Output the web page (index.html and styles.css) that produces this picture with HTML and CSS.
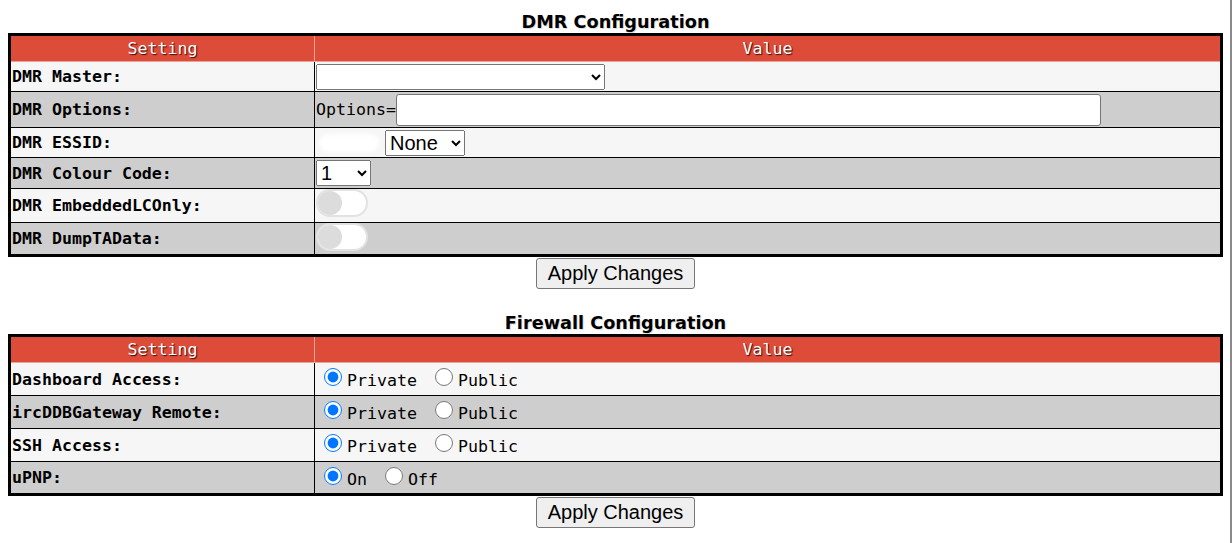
FILE: index.html
```html
<!DOCTYPE html>
<html>
<head>
<meta charset="utf-8">
<title>DMR Configuration</title>
<link rel="stylesheet" href="styles.css">
</head>
<body>
<div class="page">
  <form class="section">
    <table class="cfg">
      <caption>DMR Configuration</caption>
      <colgroup><col class="c-set"><col class="c-val"></colgroup>
      <tr class="head"><th>Setting</th><th>Value</th></tr>
      <tr class="odd h-master"><td class="lbl">DMR Master:</td><td><select class="sel-master"><option></option></select></td></tr>
      <tr class="even h-opts"><td class="lbl">DMR Options:</td><td>Options=<input type="text" class="opts"></td></tr>
      <tr class="odd h-essid"><td class="lbl">DMR ESSID:</td><td><span class="redact"></span><select class="sel-essid"><option>None</option></select></td></tr>
      <tr class="even h-cc"><td class="lbl">DMR Colour Code:</td><td><select class="sel-cc"><option>1</option></select></td></tr>
      <tr class="odd h-emb"><td class="lbl">DMR EmbeddedLCOnly:</td><td class="top"><label class="switch"><input type="checkbox"><span class="knob"></span></label></td></tr>
      <tr class="even h-dump"><td class="lbl">DMR DumpTAData:</td><td class="top"><label class="switch"><input type="checkbox"><span class="knob"></span></label></td></tr>
    </table>
    <div class="actions"><button type="button" class="apply">Apply Changes</button></div>
  </form>

  <form class="section fw">
    <table class="cfg">
      <caption>Firewall Configuration</caption>
      <colgroup><col class="c-set"><col class="c-val"></colgroup>
      <tr class="head"><th>Setting</th><th>Value</th></tr>
      <tr class="odd h-fw"><td class="lbl">Dashboard Access:</td><td><input type="radio" name="dash" checked>Private <input type="radio" name="dash">Public</td></tr>
      <tr class="even h-fw"><td class="lbl">ircDDBGateway Remote:</td><td><input type="radio" name="irc" checked>Private <input type="radio" name="irc">Public</td></tr>
      <tr class="odd h-fw"><td class="lbl">SSH Access:</td><td><input type="radio" name="ssh" checked>Private <input type="radio" name="ssh">Public</td></tr>
      <tr class="even h-fw"><td class="lbl">uPNP:</td><td><input type="radio" name="upnp" checked>On <input type="radio" name="upnp">Off</td></tr>
    </table>
    <div class="actions"><button type="button" class="apply">Apply Changes</button></div>
  </form>
</div>
</body>
</html>
```
FILE: styles.css
```css
html, body {
  margin: 0;
  padding: 0;
  background: #fff;
}

.page {
  box-sizing: border-box;
  width: 1232px;
  min-height: 543px;
  padding: 12px 7px 0 8px;
  border-right: 2px solid #8a8a8a;
}

.section {
  margin: 0;
}

.section.fw {
  margin-top: 24px;
}

.cfg {
  width: 100%;
  table-layout: fixed;
  border-collapse: collapse;
  border: 3px solid #000;
  font-family: "DejaVu Sans Mono", "Liberation Mono", monospace;
  font-size: 16.6px;
  color: #000;
}

.cfg caption {
  font-family: "DejaVu Sans", Verdana, sans-serif;
  font-weight: bold;
  font-size: 17.7px;
  line-height: 21px;
  color: #000;
  text-shadow: 1px 1px 1px rgba(0, 0, 0, 0.15);
}

.c-set {
  width: 305px;
}

.cfg th {
  background: #dd4b39;
  color: #fff;
  font-weight: normal;
  height: 25px;
  padding: 0;
  border: 1px solid #eaa49a;
  text-shadow: 1px 1px 1px #3a0a05;
  line-height: 20px;
}

.cfg td {
  border: 1px solid #000;
  padding: 0 1px;
  vertical-align: middle;
  white-space: nowrap;
}

.cfg td.top {
  vertical-align: top;
}

.cfg .lbl {
  font-weight: bold;
}

.odd td {
  background: #f6f6f6;
}

.even td {
  background: #cecece;
}

.h-master { height: 30px; }
.h-opts { height: 36px; }
.h-essid { height: 30px; }
.h-cc { height: 31px; }
.h-emb { height: 34px; }
.h-dump { height: 33px; }
.h-fw { height: 33px; }

select {
  font-family: "Liberation Sans", Arial, sans-serif;
  font-size: 20px;
  height: 26px;
  margin: 0;
  vertical-align: middle;
  color: #000;
}

.sel-master {
  width: 289px;
}

.sel-cc {
  width: 55px;
}

.sel-essid {
  width: 80px;
}

.opts {
  box-sizing: border-box;
  width: 705px;
  height: 32px;
  margin: 0;
  vertical-align: middle;
  border: 1px solid #767676;
  border-radius: 3px;
  background: #fff;
}

.redact {
  display: inline-block;
  width: 60px;
  height: 18px;
  margin: 0 6px 0 3px;
  vertical-align: middle;
  background: #fff;
  border-radius: 9px;
  filter: blur(2px);
}

.switch {
  position: relative;
  display: inline-block;
  box-sizing: border-box;
  width: 52px;
  height: 28px;
  border: 2px solid #e2e2e2;
  border-radius: 14px;
  background: #fff;
  vertical-align: top;
}

.switch input {
  position: absolute;
  opacity: 0;
  width: 0;
  height: 0;
  margin: 0;
}

.switch .knob {
  position: absolute;
  left: 0;
  top: 0;
  width: 24px;
  height: 24px;
  border-radius: 50%;
  background: #dcdcdc;
}

.cfg input[type="radio"] {
  width: 18px;
  height: 18px;
  margin: 0 5px 0 8px;
}

.actions {
  text-align: center;
}

.apply {
  font-family: "Liberation Sans", Arial, sans-serif;
  font-size: 20px;
  line-height: 23px;
  padding: 3px 11px;
  margin: 1px 0 0;
  color: #000;
  background: #efefef;
  border: 1px solid #767676;
  border-radius: 3px;
}
```
